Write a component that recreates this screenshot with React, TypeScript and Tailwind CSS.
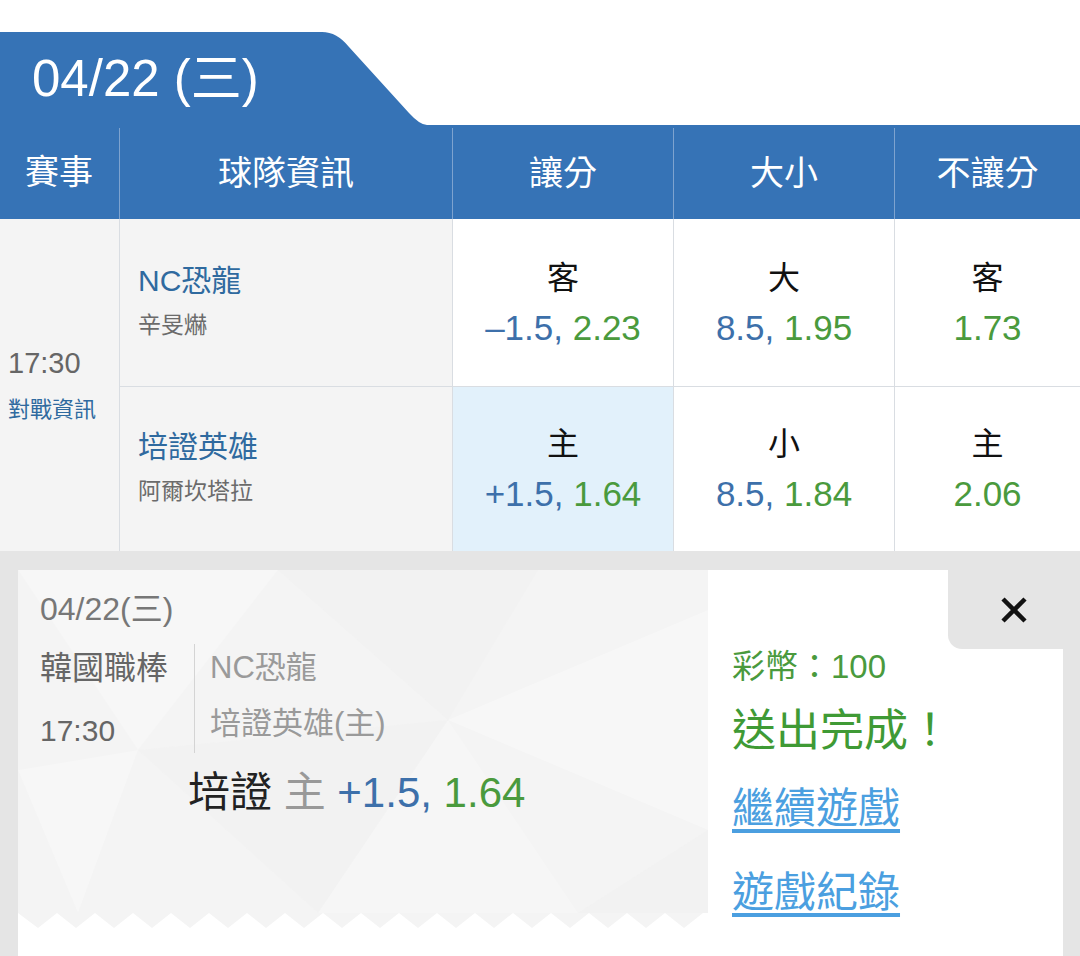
import React from 'react';

const font = "font-['Liberation_Sans','Noto_Sans_CJK_TC',sans-serif]";

type Odd = { label: string; line?: string; price: string; active?: boolean };

function OddCell({ label, line, price, active }: Odd) {
  return (
    <div className={`flex flex-col items-center justify-center border-l border-[#d9dde2] ${active ? 'bg-[#e2f1fb]' : 'bg-white'}`}>
      <div className="text-[32px] leading-[50px] text-[#111]">{label}</div>
      <div className="text-[35px] leading-[50px]">
        {line && <span className="text-[#3d70aa]">{line}, </span>}
        <span className="text-[#4a9a3d]">{price}</span>
      </div>
    </div>
  );
}

function TeamCell({ name, pitcher }: { name: string; pitcher: string }) {
  return (
    <div className="flex flex-col justify-center pl-[18px] bg-[#f4f4f4] border-l border-[#d9dde2]">
      <div className="text-[30px] leading-[44px] text-[#2f6a9f]">{name}</div>
      <div className="text-[23px] leading-[44px] text-[#6b6b6b]">{pitcher}</div>
    </div>
  );
}

// 票根底部鋸齒
function Zigzag() {
  const pts: string[] = ['0,0'];
  for (let x = 20; x <= 700; x += 38) {
    pts.push(`${x},15`, `${x + 19},0`);
  }
  pts.push('690,0');
  return (
    <svg width="690" height="16" viewBox="0 0 690 16" className="block">
      <polygon points={pts.join(' ')} fill="#f4f4f4" />
    </svg>
  );
}

function Pattern() {
  return (
    <svg width="690" height="343" viewBox="0 0 690 343" className="absolute inset-0">
      <polygon points="0,0 260,0 120,180" fill="#ffffff" opacity="0.25" />
      <polygon points="260,0 520,0 430,150" fill="#efefef" opacity="0.35" />
      <polygon points="430,150 690,40 690,260" fill="#ffffff" opacity="0.3" />
      <polygon points="120,180 430,150 300,343" fill="#f1f1f1" opacity="0.4" />
      <polygon points="0,200 120,180 60,343" fill="#ffffff" opacity="0.25" />
      <polygon points="300,343 430,150 560,343" fill="#ffffff" opacity="0.2" />
      <polygon points="560,343 690,260 690,343" fill="#efefef" opacity="0.35" />
    </svg>
  );
}

export default function App() {
  return (
    <div className={`w-[1080px] h-[956px] overflow-hidden bg-white ${font}`}>
      {/* 日期標籤 */}
      <div className="pt-8 flex">
        <div className="w-[312px] h-[93px] bg-[#3673b6] pl-8 flex items-center text-white text-[51px] leading-none">
          04/22 (三)
        </div>
        <svg width="115" height="93" viewBox="0 0 115 93" className="block">
          <path d="M0 0 L10 0 Q25 0 37 15 L97 81 Q108 93 115 93 L0 93 Z" fill="#3673b6" />
        </svg>
      </div>

      {/* 表頭 */}
      <div className="grid grid-cols-[119px_333px_221px_221px_186px] h-[94px] bg-[#3673b6] text-white text-[34px]">
        <div className="flex items-center pl-[25px]">賽事</div>
        <div className="flex items-center justify-center border-l border-[#7ea3cf] mt-[3px]">球隊資訊</div>
        <div className="flex items-center justify-center border-l border-[#7ea3cf] mt-[3px]">讓分</div>
        <div className="flex items-center justify-center border-l border-[#7ea3cf] mt-[3px]">大小</div>
        <div className="flex items-center justify-center border-l border-[#7ea3cf] mt-[3px]">不讓分</div>
      </div>

      {/* 賽事內容 */}
      <div className="grid grid-cols-[119px_333px_221px_221px_186px] grid-rows-[167px_165px]">
        <div className="row-span-2 flex flex-col justify-center pl-2 bg-[#f4f4f4]">
          <div className="text-[29px] leading-[44px] text-[#666]">17:30</div>
          <div className="text-[22px] leading-[38px] text-[#2f6a9f] mt-[6px]">對戰資訊</div>
        </div>
        <TeamCell name="NC恐龍" pitcher="辛旻爀" />
        <OddCell label="客" line="–1.5" price="2.23" />
        <OddCell label="大" line="8.5" price="1.95" />
        <OddCell label="客" price="1.73" />
        <div className="col-span-4 grid grid-cols-[333px_221px_221px_186px] border-t border-[#d9dde2]">
          <TeamCell name="培證英雄" pitcher="阿爾坎塔拉" />
          <OddCell label="主" line="+1.5" price="1.64" active />
          <OddCell label="小" line="8.5" price="1.84" />
          <OddCell label="主" price="2.06" />
        </div>
      </div>

      {/* 投注結果 */}
      <div className="bg-[#e5e5e5] pt-[19px] pl-[18px] pr-[17px] h-[405px] relative">
        <div className="bg-white h-full flex">
          <div className="w-[690px] flex flex-col">
            <div className="relative h-[343px] bg-[#f4f4f4] pl-[22px] pt-[18px]">
              <Pattern />
              <div className="relative">
                <div className="text-[32px] leading-[42px] text-[#777]">04/22(三)</div>
                <div className="flex mt-[14px]">
                  <div className="w-[155px] border-r border-[#d4d4d4] pt-[2px]">
                    <div className="text-[32px] leading-[44px] text-[#666]">韓國職棒</div>
                    <div className="text-[30px] leading-[44px] text-[#666] mt-[19px]">17:30</div>
                  </div>
                  <div className="pl-[15px]">
                    <div className="text-[31px] leading-[44px] text-[#9a9a9a] mt-[2px]">NC恐龍</div>
                    <div className="text-[31px] leading-[44px] text-[#9a9a9a] mt-[12px]">培證英雄(主)</div>
                  </div>
                </div>
                <div className="pl-[148px] text-[42px] leading-[52px] mt-[14px]">
                  <span className="text-[#222]">培證 </span>
                  <span className="text-[#999]">主 </span>
                  <span className="text-[#3d70aa]">+1.5, </span>
                  <span className="text-[#4a9a3d]">1.64</span>
                </div>
              </div>
            </div>
            <Zigzag />
          </div>
          <div className="flex-1 pl-6 pt-[77px]">
            <div className="text-[33px] leading-[40px] text-[#4a9a3d]">彩幣：100</div>
            <div className="text-[44px] leading-[56px] text-[#3f9a35] mt-[16px]">送出完成！</div>
            <div className="text-[42px] leading-[56px] text-[#4b9fe0] underline underline-offset-[6px] mt-[22px]">繼續遊戲</div>
            <div className="text-[42px] leading-[56px] text-[#4b9fe0] underline underline-offset-[6px] mt-[28px]">遊戲紀錄</div>
          </div>
        </div>
        {/* 關閉 */}
        <div className="absolute top-[19px] right-0 w-[132px] h-[79px] bg-[#e5e5e5] rounded-bl-[14px] flex items-center justify-center">
          <svg width="28" height="28" viewBox="0 0 28 28">
            <path d="M3 3 L25 25 M25 3 L3 25" stroke="#111" strokeWidth="4.5" />
          </svg>
        </div>
      </div>
    </div>
  );
}
